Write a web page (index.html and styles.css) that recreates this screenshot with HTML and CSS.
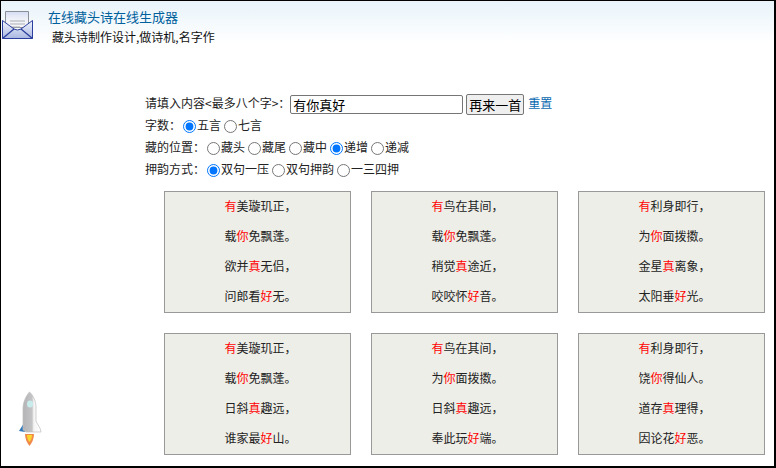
FILE: index.html
```html
<!DOCTYPE html>
<html lang="zh-CN">
<head>
<meta charset="utf-8">
<title>在线藏头诗在线生成器</title>
<link rel="stylesheet" href="styles.css">
</head>
<body>
<div class="page">
  <header class="head">
    <svg class="mail" width="33" height="29" viewBox="0 0 33 29">
      <defs>
        <linearGradient id="env" x1="0" y1="0" x2="0" y2="1"><stop offset="0" stop-color="#f2f5fc"/><stop offset="1" stop-color="#a9b8e2"/></linearGradient>
        <linearGradient id="pap" x1="0" y1="0" x2="0" y2="1"><stop offset="0" stop-color="#d5dcf4"/><stop offset=".45" stop-color="#eef0f8"/><stop offset="1" stop-color="#f8f8f8"/></linearGradient>
      </defs>
      <path d="M3.500 .5h23v16h-23z" fill="url(#pap)" stroke="#8a8f98"/>
      <path d="M8 10h15M8 13h15M8 16h10" stroke="#a9adb5" fill="none"/>
      <path d="M.5 9.500 L12 18 Q15.500 20 19 18 L30.500 9.500V27.500H.5Z" fill="url(#env)" stroke="#2b3f9c"/>
      <path d="M.5 27.500 L12 18M30.500 27.500 L19 18" stroke="#2b3f9c" fill="none" stroke-width="1.300"/>
    </svg>
    <div class="titles">
      <h1 class="title">在线藏头诗在线生成器</h1>
      <p class="sub">藏头诗制作设计,做诗机,名字作</p>
    </div>
  </header>

  <form class="form">
    <div class="row"><span class="lab">请填入内容&lt;最多八个字&gt;：</span><input class="txt" type="text" value="有你真好"><button class="btn" type="button">再来一首</button><a class="link" href="#">重置</a></div>
    <div class="row"><span class="lab">字数：</span><input type="radio" name="a" checked><span>五言</span><input type="radio" name="a"><span>七言</span></div>
    <div class="row"><span class="lab">藏的位置：</span><input type="radio" name="b"><span>藏头</span><input type="radio" name="b"><span>藏尾</span><input type="radio" name="b"><span>藏中</span><input type="radio" name="b" checked><span>递增</span><input type="radio" name="b"><span>递减</span></div>
    <div class="row"><span class="lab">押韵方式：</span><input type="radio" name="c" checked><span>双句一压</span><input type="radio" name="c"><span>双句押韵</span><input type="radio" name="c"><span>一三四押</span></div>
  </form>

  <main class="poems">
    <section class="poem"><p><b>有</b>美璇玑正，</p><p>载<b>你</b>免飘蓬。</p><p>欲并<b>真</b>无侣，</p><p>问郎看<b>好</b>无。</p></section>
    <section class="poem"><p><b>有</b>鸟在其间，</p><p>载<b>你</b>免飘蓬。</p><p>稍觉<b>真</b>途近，</p><p>咬咬怀<b>好</b>音。</p></section>
    <section class="poem"><p><b>有</b>利身即行，</p><p>为<b>你</b>面拨擞。</p><p>金星<b>真</b>离象，</p><p>太阳垂<b>好</b>光。</p></section>
    <section class="poem"><p><b>有</b>美璇玑正，</p><p>载<b>你</b>免飘蓬。</p><p>日斜<b>真</b>趣远，</p><p>谁家最<b>好</b>山。</p></section>
    <section class="poem"><p><b>有</b>鸟在其间，</p><p>为<b>你</b>面拨擞。</p><p>日斜<b>真</b>趣远，</p><p>奉此玩<b>好</b>端。</p></section>
    <section class="poem"><p><b>有</b>利身即行，</p><p>饶<b>你</b>得仙人。</p><p>道存<b>真</b>理得，</p><p>因论花<b>好</b>恶。</p></section>
  </main>

  <svg class="rocket" width="24" height="58" viewBox="0 0 24 58">
    <defs>
      <linearGradient id="body" x1="0" y1="0" x2="1" y2="0"><stop offset="0" stop-color="#b4b4b6"/><stop offset=".5" stop-color="#c4c4c6"/><stop offset=".6" stop-color="#f4f4f4"/><stop offset="1" stop-color="#fff"/></linearGradient>
    </defs>
    <path d="M1 40 L6 32 L7 41 Z" fill="#2f78bd"/>
    <path d="M11.500 1 C8 5 5 11 5 18 L5 39 L8 41 L23 41 C23 37 19 33 18 30 L18 16 C18 10 15 4 11.500 1Z" fill="url(#body)" stroke="#bdbdbd" stroke-width=".7"/>
    <ellipse cx="12" cy="13" rx="3" ry="3.500" fill="#c8ecec"/>
    <path d="M7 43 H16 C16 48 14 52 11.500 55 C9 52 7 48 7 43Z" fill="#f08a4a"/>
    <path d="M9 44 H14 C14 47 13 49 11.500 51 C10 49 9 47 9 44Z" fill="#fbd62c"/>
  </svg>
</div>
</body>
</html>
```

FILE: styles.css
```css
* { box-sizing: border-box; }
html, body { margin: 0; height: 100%; }
body {
  background: #fff;
  font-family: "Noto Sans CJK SC", "Liberation Sans", sans-serif;
  font-size: 12px;
  color: #000;
}
.page {
  position: relative;
  width: 776px;
  height: 468px;
  border: solid #000;
  border-width: 1px 2px 2px 1px;
  overflow: hidden;
}
.head {
  display: flex;
  height: 52px;
  padding: 10px 0 0 1px;
  background: linear-gradient(#e8f3fa, #fff 80%);
}
.mail { flex: none; }
.titles { margin: -2px 0 0 13px; }
.title {
  margin: 0;
  font-size: 13px;
  font-weight: normal;
  line-height: 15px;
  color: #00609c;
}
.sub { margin: 6px 0 0 4px; line-height: 14px; font-size: 12px; color: #111; }
.form { padding: 40px 0 0 144px; }
.row {
  display: flex;
  align-items: center;
  height: 22px;
  line-height: 20px;
  white-space: nowrap;
  color: #222;
}
.row > span, .link { margin-bottom: 2px; }
.lab { margin-right: -1px; }
.row input[type=radio] { margin: 0 1px 0 3px; width: 13px; height: 13px; flex: none; }
.row .txt {
  width: 173px;
  height: 19px;
  margin: 0 0 0 1px;
  padding: 1px 2px;
  font: 13px "Noto Sans CJK SC", sans-serif;
  border: 1px solid #767676;
  border-radius: 2px;
}
.btn {
  width: 58px;
  height: 21px;
  margin: 0 4px 0 3px;
  padding: 0;
  font: 13px "Noto Sans CJK SC", sans-serif;
  background: #efefef;
  border: 1px solid #767676;
  border-radius: 2px;
}
.link { color: #0a6ab0; text-decoration: none; }
.poems {
  display: grid;
  grid-template-columns: repeat(3, 187px);
  gap: 20px;
  padding: 10px 0 0 163px;
}
.poem {
  height: 122px;
  background: #eeeee8;
  border: 1px solid #999;
}
.poem p { margin: 0; height: 30px; padding-left: 6px; line-height: 28px; text-align: center; color: #222; }
.poem b { font-weight: normal; color: #f00; }
.rocket { position: absolute; left: 17px; top: 390px; }
```
